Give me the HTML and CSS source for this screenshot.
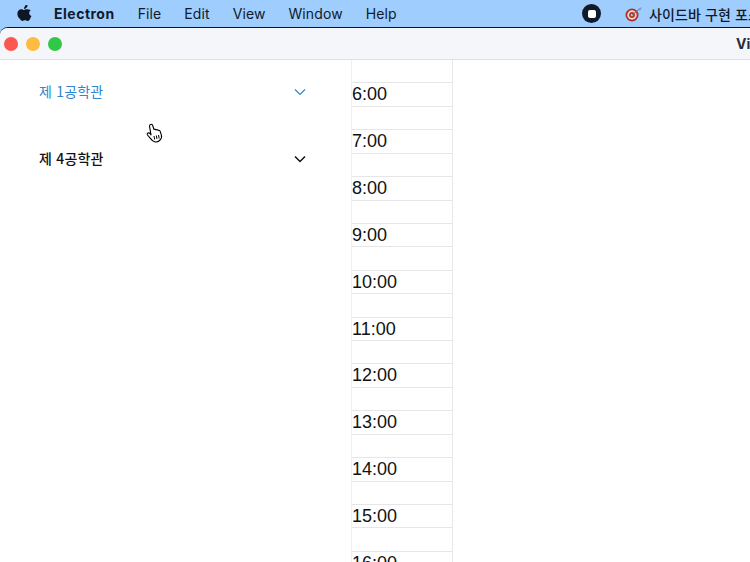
FILE: index.html
```html
<!DOCTYPE html>
<html lang="ko">
<head>
<meta charset="utf-8">
<title>Electron</title>
<link rel="stylesheet" href="styles.css">
</head>
<body>
<header class="menubar">
  <svg class="apple" viewBox="0 0 16 19" width="16" height="19"><path d="M11.2 1c.1 1.1-.3 2.1-1 2.9-.7.8-1.700 1.300-2.700 1.200-.1-1 .4-2.100 1-2.800C9 .6 10.200 1 11.200 1zM14.700 6.500c-1 .7-1.700 1.700-1.700 3 0 1.500.9 2.700 2.400 3.300-.4 1.200-1 2.300-1.700 3.300-.7 1-1.400 1.900-2.500 1.900s-1.400-.7-2.700-.7c-1.300 0-1.700.7-2.700.7-1.100 0-1.800-.9-2.600-2C1.100 14.300.4 12.200.4 10.300c0-3 2-4.700 4-4.700 1.100 0 2 .7 2.700.7.700 0 1.700-.8 3-.8 1.100 0 3.300.2 4.600 1z"/></svg>
  <span class="menu-item app-name">Electron</span>
  <span class="menu-item">File</span>
  <span class="menu-item">Edit</span>
  <span class="menu-item">View</span>
  <span class="menu-item">Window</span>
  <span class="menu-item">Help</span>
  <span class="status">
    <span class="stop"><span class="stop-square"></span></span>
    <svg class="target" viewBox="0 0 18 16" width="18" height="16">
      <circle cx="7" cy="9" r="6.500" fill="#a8322c"/>
      <circle cx="7" cy="9" r="4.700" fill="#e9d9d0"/>
      <circle cx="7" cy="9" r="3" fill="#bf3a32"/>
      <circle cx="7" cy="9" r="1.100" fill="#e9d9d0"/>
      <path d="M7 9L14.500 3" stroke="#6a7480" stroke-width="1"/>
      <path d="M13.500 2.500l3-1.500-.4 3-1.700.6z" fill="#7fa3c2"/>
    </svg>
    <span class="status-text">사이드바 구현 포스</span>
  </span>
</header>
<div class="window">
  <div class="titlebar">
    <span class="light red"></span>
    <span class="light yellow"></span>
    <span class="light green"></span>
    <span class="title">Vi</span>
  </div>
  <main class="content">
    <nav class="sidebar">
      <div class="side-row active">
        <span>제 1공학관</span>
        <svg class="chev" viewBox="0 0 12 8" width="12" height="8"><path d="M1 1.500l5 5 5-5" fill="none" stroke="currentColor" stroke-width="1.200"/></svg>
      </div>
      <div class="side-row">
        <span>제 4공학관</span>
        <svg class="chev" viewBox="0 0 12 8" width="12" height="8"><path d="M1 1.500l5 5 5-5" fill="none" stroke="currentColor" stroke-width="1.500"/></svg>
      </div>
      <svg class="cursor" viewBox="0 0 18 21" width="18" height="21"><path d="M4.500 1.500c1-.6 1.900 0 2.200 1l1.300 4c.8-.5 1.700-.3 2.100.4.700-.5 1.700-.3 2.100.5.800-.3 1.600.1 1.900.8l1.300 4c.6 2-.3 4-1.800 5.300-1.200 1-3.200 1.800-5 1.300-1.700-.5-2.900-1.700-4-3.200L1.500 12c-.5-.7-.3-1.500.3-1.900.7-.4 1.500-.2 2.100.4l1.100 1.300-1.500-8.600c-.1-.7.100-1.300 1-1.700z" fill="#fff" stroke="#000" stroke-width="1.100" stroke-linejoin="round"/><path d="M8 13l.7 3.500M10.300 12.500l.7 3.500M12.500 12l.7 3.500" stroke="#000" stroke-width="1"/></svg>
    </nav>
    <section class="times">
      <div class="slot"></div><div class="slot">6:00</div>
      <div class="slot"></div><div class="slot">7:00</div>
      <div class="slot"></div><div class="slot">8:00</div>
      <div class="slot"></div><div class="slot">9:00</div>
      <div class="slot"></div><div class="slot">10:00</div>
      <div class="slot"></div><div class="slot">11:00</div>
      <div class="slot"></div><div class="slot">12:00</div>
      <div class="slot"></div><div class="slot">13:00</div>
      <div class="slot"></div><div class="slot">14:00</div>
      <div class="slot"></div><div class="slot">15:00</div>
      <div class="slot"></div><div class="slot">16:00</div>
    </section>
  </main>
</div>
</body>
</html>
```
FILE: styles.css
```css
* { box-sizing: border-box; }
html, body {
  margin: 0;
  width: 750px;
  height: 562px;
  overflow: hidden;
  background: #9fcdfd;
}
body {
  display: flex;
  flex-direction: column;
  font-family: Inter, "Noto Sans CJK KR", sans-serif;
}
.menubar {
  flex: none;
  height: 27px;
  display: flex;
  align-items: center;
  padding-left: 17px;
  color: #101a2b;
  font-size: 14px;
  letter-spacing: .1px;
  white-space: nowrap;
  overflow: hidden;
}
.apple { flex: none; width: 15px; height: 18px; margin-right: 22px; margin-top: -2px; fill: #0d1622; }
.menu-item { margin-right: 23px; }
.app-name { font-weight: 700; letter-spacing: .5px; }
.status { position: absolute; left: 582px; top: 0; height: 27px; display: flex; align-items: center; }
.stop {
  width: 19px;
  height: 19px;
  border-radius: 50%;
  background: #0f1a2b;
  display: flex;
  align-items: center;
  justify-content: center;
}
.stop-square { width: 8px; height: 8px; border-radius: 2px; background: #fff; }
.target { margin-left: 24px; margin-top: 1px; }
.status-text { margin-left: 6px; font-family: "Noto Sans CJK KR", sans-serif; font-size: 14px; font-weight: 500; }
.window {
  flex: 1;
  min-height: 0;
  display: flex;
  flex-direction: column;
  background: #fff;
  border-top: 1px solid #0c1420;
  border-top-left-radius: 8px;
  overflow: hidden;
}
.titlebar {
  flex: none;
  height: 32px;
  display: flex;
  align-items: center;
  gap: 8.200px;
  padding-left: 4px;
  background: #f5f6fa;
  border-bottom: 1px solid #dfe0e2;
}
.light { width: 14px; height: 14px; border-radius: 50%; }
.red { background: #fc5753; }
.yellow { background: #fdbc40; }
.green { background: #33c748; }
.title { margin-left: auto; width: 14px; overflow: hidden; font-weight: 700; font-size: 14px; color: #2a2d33; }
.content { flex: 1; min-height: 0; display: flex; overflow: hidden; }
.sidebar { position: relative; flex: none; width: 352px; }
.side-row {
  display: flex;
  align-items: center;
  justify-content: space-between;
  height: 67px;
  padding: 0 46px 6px 39px;
  font-family: "Noto Sans CJK KR", sans-serif;
  font-size: 14px;
  font-weight: 500;
  letter-spacing: .2px;
  color: #111;
}
.active { color: #2f86cf; font-weight: 400; }
.chev { flex: none; margin-top: 2px; }
.cursor { position: absolute; left: 146px; top: 63px; }
.times {
  flex: none;
  width: 102px;
  height: 520px;
  border-right: 1px solid #e8e8ea;
  border-left: 1px solid #efeff1;
  margin-left: -1px;
  font-family: "Liberation Sans", sans-serif;
  font-size: 18px;
  color: #111;
}
.slot {
  height: 23.430px;
  line-height: 22px;
  border-bottom: 1.500px solid #e6e6e8;
  white-space: nowrap;
}
```
